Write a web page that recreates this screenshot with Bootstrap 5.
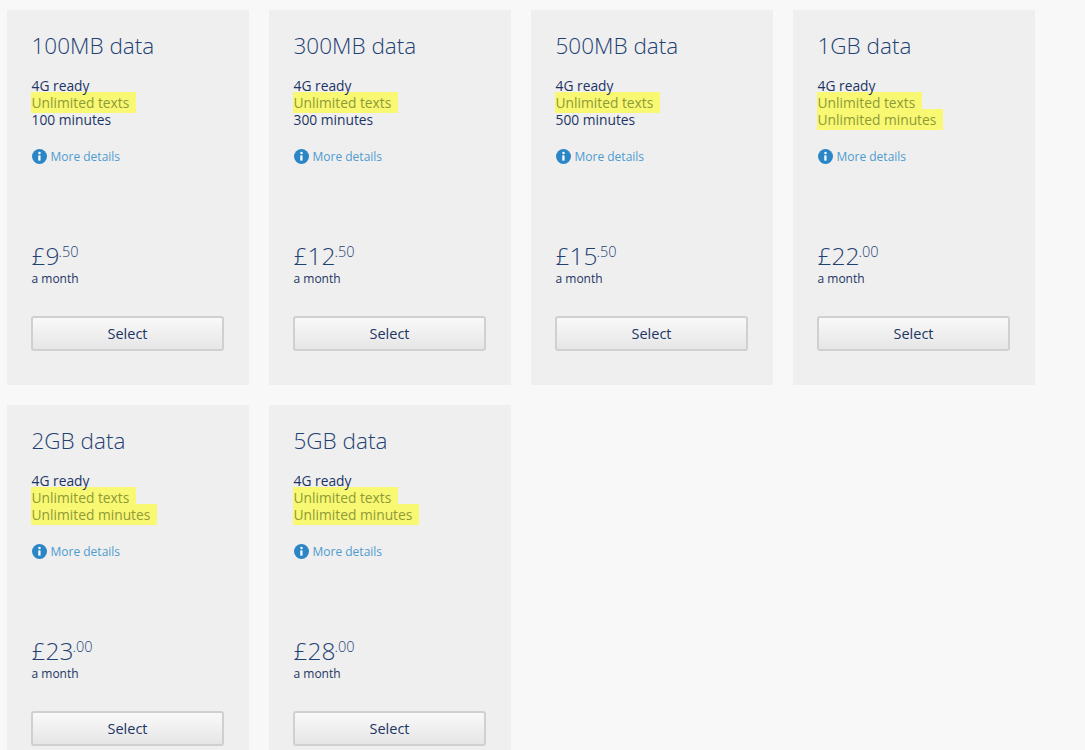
<!DOCTYPE html>
<html lang="en"><head><meta charset="utf-8"><title>Plans</title>
<link rel="stylesheet" href="https://cdn.jsdelivr.net/npm/bootstrap@5.3.0/dist/css/bootstrap.min.css">
<style>
html,body{height:750px;overflow:hidden}
body{background:#f8f8f8;color:#1c3564;font-family:"Open Sans","Noto Sans",sans-serif;font-size:13.8px;line-height:17px}
.plans{display:grid;grid-template-columns:repeat(4,242px);grid-auto-rows:375px;gap:20px;padding:10px 0 0 7px}
.plan{background:#efefef;padding:24px 24px 0 24.5px;display:flex;flex-direction:column}
.plan-title{font-size:22.5px;line-height:24px;font-weight:300;margin:0 0 19px;color:#1f4273}
.feat{height:51px;isolation:isolate}
.hl{display:block;width:max-content;position:relative;color:#8f9a38}
.hl::before{content:"";position:absolute;inset:-2px -7px -2px -1px;background:#f8f872;z-index:-1}
.more{display:flex;align-items:center;gap:4px;margin-top:20px;height:17px;font-size:12px;color:#4e9bd0;text-decoration:none}
.more svg{flex:none}
.price{margin-top:76px;font-size:24.5px;line-height:30px;font-weight:300;color:#1f4273;white-space:nowrap}
.price sup{font-size:14.5px;top:-.55em;line-height:0;vertical-align:baseline;position:relative;margin-left:-1px}
.per{font-size:12px;line-height:14px;margin-top:1px;color:#1c3564}
.pick{margin:30px 0 0 -.5px;height:35px;width:193px;padding:0;font-size:14.5px;color:#1c3564;border:2px solid #d0d0d0;border-radius:3px;background:linear-gradient(#f9f9f9,#e6e6e6)}
.pick:hover{color:#1c3564;border-color:#d0d0d0}
</style></head><body>
<svg width="0" height="0" class="position-absolute"><symbol id="inf" viewBox="0 0 16 16"><circle cx="8" cy="8" r="8" fill="#2b86c5"/><circle cx="8" cy="4.3" r="1.3" fill="#fff"/><path d="M6.7 6.8h2.4v5.6H6.7z" fill="#fff"/></symbol></svg>
<main class="plans">
<section class="plan"><h2 class="plan-title">100MB data</h2><div class="feat"><div>4G ready</div><span class="hl">Unlimited texts</span><div>100 minutes</div></div><a class="more" href="#"><svg width="15" height="15"><use href="#inf"/></svg>More details</a><div class="price">£9<sup>.50</sup></div><div class="per">a month</div><button class="btn pick">Select</button></section>
<section class="plan"><h2 class="plan-title">300MB data</h2><div class="feat"><div>4G ready</div><span class="hl">Unlimited texts</span><div>300 minutes</div></div><a class="more" href="#"><svg width="15" height="15"><use href="#inf"/></svg>More details</a><div class="price">£12<sup>.50</sup></div><div class="per">a month</div><button class="btn pick">Select</button></section>
<section class="plan"><h2 class="plan-title">500MB data</h2><div class="feat"><div>4G ready</div><span class="hl">Unlimited texts</span><div>500 minutes</div></div><a class="more" href="#"><svg width="15" height="15"><use href="#inf"/></svg>More details</a><div class="price">£15<sup>.50</sup></div><div class="per">a month</div><button class="btn pick">Select</button></section>
<section class="plan"><h2 class="plan-title">1GB data</h2><div class="feat"><div>4G ready</div><span class="hl">Unlimited texts</span><span class="hl">Unlimited minutes</span></div><a class="more" href="#"><svg width="15" height="15"><use href="#inf"/></svg>More details</a><div class="price">£22<sup>.00</sup></div><div class="per">a month</div><button class="btn pick">Select</button></section>
<section class="plan"><h2 class="plan-title">2GB data</h2><div class="feat"><div>4G ready</div><span class="hl">Unlimited texts</span><span class="hl">Unlimited minutes</span></div><a class="more" href="#"><svg width="15" height="15"><use href="#inf"/></svg>More details</a><div class="price">£23<sup>.00</sup></div><div class="per">a month</div><button class="btn pick">Select</button></section>
<section class="plan"><h2 class="plan-title">5GB data</h2><div class="feat"><div>4G ready</div><span class="hl">Unlimited texts</span><span class="hl">Unlimited minutes</span></div><a class="more" href="#"><svg width="15" height="15"><use href="#inf"/></svg>More details</a><div class="price">£28<sup>.00</sup></div><div class="per">a month</div><button class="btn pick">Select</button></section>
</main>
<script src="https://cdn.jsdelivr.net/npm/bootstrap@5.3.0/dist/js/bootstrap.bundle.min.js"></script>
</body></html>
